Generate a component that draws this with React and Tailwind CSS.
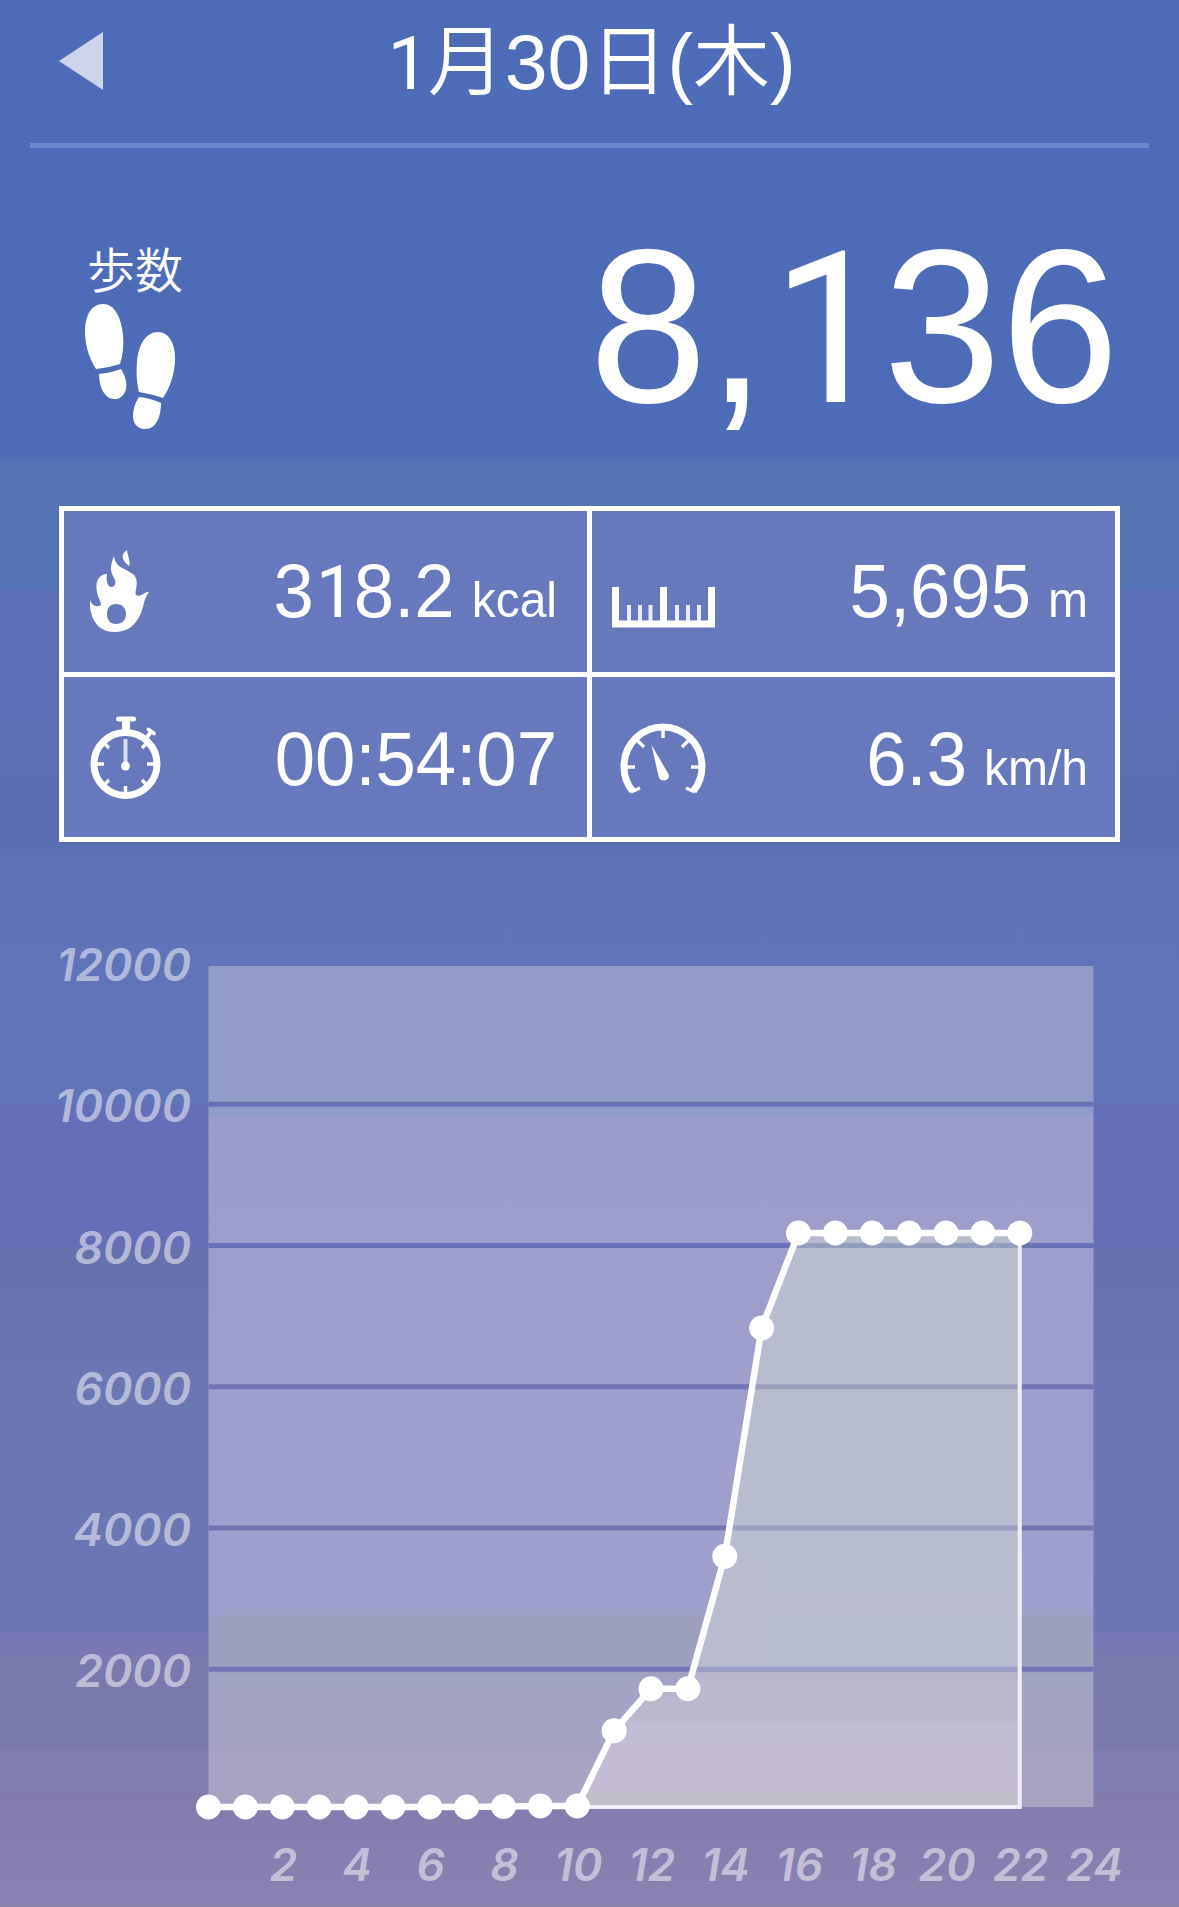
// hourly cumulative step count, 0h - 22h
const hourly = [0, 0, 0, 0, 0, 0, 0, 0, 7, 14, 14, 1081, 1675, 1675, 3550, 6785, 8130, 8130, 8130, 8130, 8130, 8130, 8130];

const yTicks = [12000, 10000, 8000, 6000, 4000, 2000];
const xTicks = [2, 4, 6, 8, 10, 12, 14, 16, 18, 20, 22, 24];

// chart geometry
const LEFT = 208.5;
const RIGHT = 1093.5;
const TOP = 38;
const BOTTOM = 879;
const x = (h) => LEFT + (h * (RIGHT - LEFT)) / 24;
const y = (v) => BOTTOM - (v * 141.2) / 2000;
const gridY = (v) => BOTTOM + 3.5 - (v * 141.25) / 2000;

function Num({ children }) {
  return (
    <>
      {children.split("").map((c, i) =>
        c === "1" ? (
          <span key={i} className="ml-[0.030em] mr-[-0.020em] font-['Roboto'] text-[0.965em] leading-[0] font-normal">1</span>
        ) : (
          c
        )
      )}
    </>
  );
}

function Footprints() {
  return (
    <svg width="92" height="126" viewBox="0 0 92 126" fill="#fff">
      <path d="M18 0C7 0 0 11 0 27C0 40 3 52 11 65Q23 64 35 60C38 50 39 41 38 31C36 12 29 0 18 0Z" />
      <path d="M14 70Q26 69 36 65C41 73 42 80 41 85C39 92 34 96 28 95C20 94 14 84 14 70Z" />
      <path d="M73 28C61 28 53 41 52 59C51 69 52 80 54 88Q66 90 78 94C86 82 89 70 90 58C91 40 84 28 73 28Z" />
      <path d="M54 93Q65 94 76 99C76 111 72 125 60 125C52 125 48 119 48 112C48 105 50 99 54 93Z" />
    </svg>
  );
}

function Flame() {
  return (
    <svg width="60" height="84" viewBox="0 0 60 84" fill="#fff">
      <path d="M37 1C31 5 31 11 39 17C41 13 38 9 37 1Z" />
      <path
        fillRule="evenodd"
        d="M24 7C19 19 21 24 24 29C27 34 25 38 21 38C17 37 16 31 17 25C8 25 5 34 7 43C8 49 11 52 11 56C6 59 2 56 0 51C-1 68 7 83 24 83C38 83 46 76 51 64C54 56 54 49 59 43C55 42 50 49 46 46C44 42 50 33 44 26C36 19 25 19 24 7ZM26 55C32 55 36 59 36 65C36 71 32 75 26 75C20 75 17 71 17 65C17 59 20 55 26 55Z"
      />
    </svg>
  );
}

function Ruler() {
  return (
    <svg width="104" height="42" viewBox="0 0 104 42" fill="none" stroke="#fff">
      <path d="M3.5 1V38H99.5V1M51.500 1V38" strokeWidth="7" />
      <path d="M17 19V36M28 19V36M38.500 19V36M65 19V36M76 19V36M87 19V36" strokeWidth="4" strokeOpacity=".85" />
    </svg>
  );
}

function Stopwatch() {
  return (
    <svg width="72" height="84" viewBox="0 0 72 84" fill="none" stroke="#fff">
      <circle cx="35.500" cy="48" r="31.500" strokeWidth="7" />
      <path d="M28.500 3H43.500" strokeWidth="5" strokeLinecap="round" />
      <path d="M36 3V16" strokeWidth="8" />
      <path d="M57 21L61 16M58.500 13.500L64 17.500" strokeWidth="4" strokeLinecap="round" />
      <path d="M35.500 23V50" strokeWidth="4" opacity=".75" />
      <circle cx="35.500" cy="50" r="4.500" fill="#fff" stroke="none" />
      <path d="M6 48H14M57 48H65M35.500 70V77M14 27L19 32M57 27L52 32M14 69L19 64M57 69L52 64" strokeWidth="3.500" />
    </svg>
  );
}

function Gauge() {
  return (
    <svg width="86" height="72" viewBox="0 0 86 72" fill="none" stroke="#fff">
      <path d="M12.500 68A39 39.500 0 1 1 73.500 68" strokeWidth="7" />
      <path d="M43 5V15M18 18L24 24M68 18L62 24M5 44H15M81 44H71M11 69L20 65M75 69L66 65" strokeWidth="3.500" />
      <path d="M31.500 22L48.500 51C50 55 47 57.500 44 57.500C41 57.500 39 56 38.500 53Z" fill="#fff" stroke="none" />
    </svg>
  );
}

function Stat({ icon, iconClass, value, unit, textClass }) {
  return (
    <div className="flex items-center justify-between bg-[#6579bc] text-white">
      <div className={iconClass}>{icon}</div>
      <div className={`origin-bottom scale-y-[1.04] whitespace-nowrap leading-none ${textClass}`}>
        <span className="text-[72.500px]"><Num>{value}</Num></span>
        {unit && <span className="ml-[17px] text-[48px]">{unit}</span>}
      </div>
    </div>
  );
}

function StepChart() {
  const line = hourly.map((v, h) => `${x(h)},${y(v)}`).join(" ");
  const last = x(hourly.length - 1);

  return (
    <svg className="block" width="1179" height="979" viewBox="0 0 1179 979">
      <defs>
        <linearGradient id="plot" x1="0" y1={TOP} x2="0" y2={BOTTOM} gradientUnits="userSpaceOnUse">
          <stop offset="0" stopColor="#919dc6" />
          <stop offset="0.180" stopColor="#919dc8" />
          <stop offset="0.180" stopColor="#9c9dca" />
          <stop offset="0.772" stopColor="#9e9fcc" />
          <stop offset="0.772" stopColor="#9d9fbe" />
          <stop offset="0.835" stopColor="#9d9fc0" />
          <stop offset="0.850" stopColor="#a2a4c5" />
          <stop offset="0.924" stopColor="#a3a4c4" />
          <stop offset="0.924" stopColor="#a7a1c4" />
          <stop offset="1" stopColor="#a9a2c3" />
        </linearGradient>
        <linearGradient id="area" x1="0" y1={TOP} x2="0" y2={BOTTOM} gradientUnits="userSpaceOnUse">
          <stop offset="0" stopColor="#eefad8" />
          <stop offset="0.772" stopColor="#f0fad6" />
          <stop offset="0.772" stopColor="#f2faf4" />
          <stop offset="0.838" stopColor="#f2faf4" />
          <stop offset="0.838" stopColor="#ebdfe4" />
          <stop offset="0.898" stopColor="#ebdfe4" />
          <stop offset="0.898" stopColor="#fcf2f4" />
          <stop offset="0.983" stopColor="#fcf2f4" />
          <stop offset="0.983" stopColor="#f4f8d6" />
          <stop offset="1" stopColor="#f4f8d6" />
        </linearGradient>
      </defs>

      <rect x={LEFT} y={TOP} width={RIGHT - LEFT} height={BOTTOM - TOP} fill="url(#plot)" />
      {yTicks.slice(1).map((v) => (
        <rect key={v} x={LEFT} y={gridY(v) - 2.5} width={RIGHT - LEFT} height="5" fill={v > 6000 ? "#6672b4" : "#7174b2"} />
      ))}

      {/* area under the line */}
      <polygon points={`${line} ${last},${BOTTOM} ${LEFT},${BOTTOM}`} fill="url(#area)" fillOpacity="0.320" />
      <polyline points={`${LEFT},${BOTTOM} ${last},${BOTTOM} ${last},${y(8130)}`} fill="none" stroke="#f1eefb" strokeWidth="4" />
      <polyline points={line} fill="none" stroke="#fff" strokeWidth="6.500" strokeLinejoin="round" />
      {hourly.map((v, h) => (
        <circle key={h} cx={x(h)} cy={y(v)} r="12.500" fill="#fff" />
      ))}

      <g className="font-['Inter',sans-serif] text-[44.500px] font-semibold italic" fill="#fff" fillOpacity="0.520">
        {yTicks.map((v) => (
          <text key={v} x="191" y={gridY(v) + 18} textAnchor="end">{v}</text>
        ))}
        {xTicks.map((h) => (
          <text key={h} x={x(h) + 1} y="952.500" textAnchor="middle">{h}</text>
        ))}
      </g>
    </svg>
  );
}

export default function App() {
  return (
    <div className="flex h-[1907px] w-[1179px] flex-col overflow-hidden bg-[linear-gradient(to_bottom,#4d6cb7_0px,#4d6cb7_457px,#5373b4_457px,#5373b4_590px,#5a6fb5_590px,#5a6fb3_855px,#5f74b7_855px,#6074b8_1105px,#656fb7_1105px,#666fb6_1248px,#6672ae_1248px,#6673af_1360px,#6a77b3_1360px,#6b77b3_1632px,#7876b6_1632px,#7a79ae_1665px,#7a79ae_1751px,#807eb5_1751px,#817eb4_1792px,#847ab0_1792px,#8982b1_1907px)] font-['Liberation_Sans','Noto_Sans_CJK_JP',sans-serif] text-white">
      {/* header */}
      <header className="mx-[30px] flex h-[148px] items-start border-b-[5px] border-[#6c87cb]">
        <svg className="ml-[29px] mt-[32px]" width="44" height="58" viewBox="0 0 44 58">
          <path d="M0 29L44 0V58Z" fill="#cdd5ea" />
        </svg>
        <h1 className="mr-[73px] mt-[12px] flex-1 pl-[2px] text-center text-[77px] font-[350] leading-[100px]">
          <Num>1月30日(木)</Num>
        </h1>
      </header>

      {/* steps */}
      <section className="flex h-[358px] justify-between pl-[85px] pr-[60px]">
        <div className="pt-[94px]">
          <p className="ml-[2px] text-[48px] font-[350] leading-[60px]">歩数</p>
          <div className="mt-[2px]"><Footprints /></div>
        </div>
        <p className="origin-bottom scale-y-[1.03] pt-[64px] text-[212px] leading-[240px]"><Num>8,136</Num></p>
      </section>

      {/* stats */}
      <section className="mx-[59px] grid h-[336px] grid-cols-2 grid-rows-2 gap-[5px] border-[5px] border-white bg-white">
        <Stat icon={<Flame />} iconClass="pl-[26px]" value="318.2" unit="kcal" textClass="pr-[30px] pt-[2px]" />
        <Stat icon={<Ruler />} iconClass="pl-[20px] pt-[31px]" value="5,695" unit="m" textClass="pr-[27px] pt-[2px]" />
        <Stat icon={<Stopwatch />} iconClass="pl-[26px] pt-[3px]" value="00:54:07" textClass="pr-[30px] pt-[7px]" />
        <Stat icon={<Gauge />} iconClass="pl-[28px] pt-[4px]" value="6.3" unit="km/h" textClass="pr-[27px] pt-[7px]" />
      </section>

      <div className="mt-[86px]">
        <StepChart />
      </div>
    </div>
  );
}
